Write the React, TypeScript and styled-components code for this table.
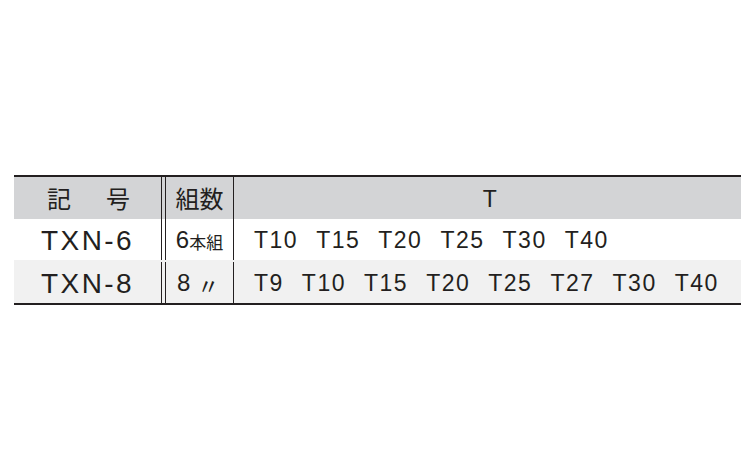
import React from "react";
import styled, { createGlobalStyle } from "styled-components";

const GlobalStyle = createGlobalStyle`
  body {
    margin: 0;
    background: #ffffff;
    font-family: "Liberation Sans", "Noto Sans CJK JP", sans-serif;
    color: #231f20;
  }
`;

const Page = styled.div`
  padding: 175px 0 0 14px;
`;

const Table = styled.div`
  width: 727px;
  border-top: 2px solid #231f20;
  border-bottom: 2px solid #231f20;
`;

const Row = styled.div<{ $bg: string; $h: number; $shift?: number }>`
  box-sizing: border-box;
  display: grid;
  grid-template-columns: 148px 71px 1fr;
  height: ${(p) => p.$h}px;
  padding-top: ${(p) => p.$shift || 0}px;
  background: ${(p) => p.$bg};
`;

const Cell = styled.div`
  display: flex;
  align-items: center;
  min-width: 0;
`;

const CodeCell = styled(Cell)`
  justify-content: center;
  border-right: 1px solid #231f20;
`;

const SetCell = styled(Cell)<{ $align?: string }>`
  margin-left: 3px;
  border-left: 1px solid #231f20;
  justify-content: ${(p) => p.$align || "center"};
  padding-left: ${(p) => (p.$align === "flex-start" ? "11px" : "0")};
`;

const SizeCell = styled(Cell)<{ $align?: string }>`
  border-left: 1px solid #231f20;
  justify-content: ${(p) => p.$align || "flex-start"};
  padding-left: ${(p) => (p.$align === "center" ? "6px" : "20px")};
  gap: 18px;
`;

const HeadText = styled.span`
  font-family: "Noto Sans CJK JP", sans-serif;
  font-size: 24px;
  line-height: 1;
`;

const HeadCode = styled(HeadText)`
  display: flex;
  gap: 35px;
  margin-left: 2px;
`;

const Code = styled.span`
  font-size: 28px;
  letter-spacing: 2.4px;
  line-height: 1;
  margin-top: 2px;
`;

const Size = styled.span`
  font-size: 23px;
  letter-spacing: 1.5px;
  line-height: 1;
  margin-top: 2px;
`;

const Count = styled.span`
  font-size: 24px;
  line-height: 1;
  margin-top: 1px;
`;

const Unit = styled.span`
  font-family: "Noto Sans CJK JP", sans-serif;
  font-size: 17px;
  line-height: 1;
  margin-top: 3px;
`;

const Ditto = styled(Unit)`
  margin-left: 7px;
  font-size: 22px;
`;

interface IItem {
  code: string;
  count: string;
  sizes: string[];
  bg: string;
  h: number;
  shift: number;
}

const items: IItem[] = [
  {
    code: "TXN-6",
    count: "6",
    sizes: ["T10", "T15", "T20", "T25", "T30", "T40"],
    bg: "#ffffff",
    h: 41,
    shift: 0,
  },
  {
    code: "TXN-8",
    count: "8",
    sizes: ["T9", "T10", "T15", "T20", "T25", "T27", "T30", "T40"],
    bg: "#f1f1f1",
    h: 43,
    shift: 2,
  },
];

const App: React.FC = () => (
  <>
    <GlobalStyle />
    <Page>
      <Table>
        <Row $bg={"#d3d4d6"} $h={42}>
          <CodeCell>
            <HeadCode>
              <span>記</span>
              <span>号</span>
            </HeadCode>
          </CodeCell>
          <SetCell>
            <HeadText>組数</HeadText>
          </SetCell>
          <SizeCell $align={"center"}>
            <Size>T</Size>
          </SizeCell>
        </Row>
        {items.map((item, i) => (
          <Row key={item.code} $bg={item.bg} $h={item.h} $shift={item.shift}>
            <CodeCell>
              <Code>{item.code}</Code>
            </CodeCell>
            {i === 0 ? (
              <SetCell>
                <Count>{item.count}</Count>
                <Unit>本組</Unit>
              </SetCell>
            ) : (
              <SetCell $align={"flex-start"}>
                <Count>{item.count}</Count>
                <Ditto>〃</Ditto>
              </SetCell>
            )}
            <SizeCell>
              {item.sizes.map((s) => (
                <Size key={s}>{s}</Size>
              ))}
            </SizeCell>
          </Row>
        ))}
      </Table>
    </Page>
  </>
);

export default App;
